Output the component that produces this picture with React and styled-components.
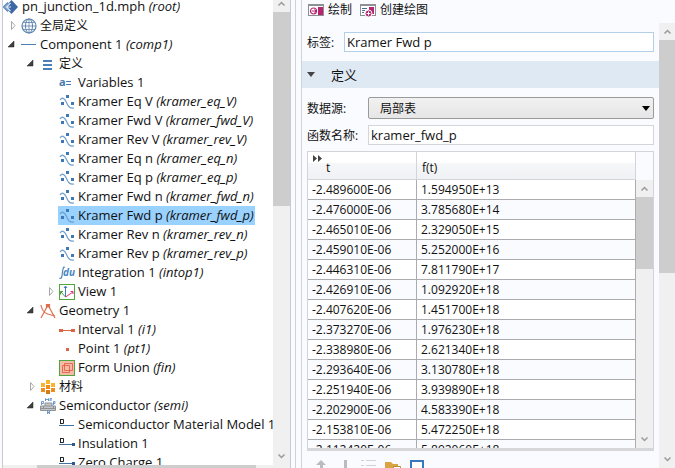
import React, {useState} from 'react'
import styled, {createGlobalStyle, css} from 'styled-components'

/**
 * STYLING
 */
const GlobalStyle = createGlobalStyle`
  * {
    box-sizing: border-box;
  }
  body {
    margin: 0;
    overflow: hidden;
    background: #fafbff;
    color: #111;
    font-family: 'Open Sans', 'Noto Sans CJK SC', sans-serif;
    font-size: 12px;
  }
  button, input, select {
    font: inherit;
    color: inherit;
  }
`

const Window = styled.div`
  display: flex;
  height: 100vh;
  overflow: hidden;
`

const TreePane = styled.nav`
  flex: none;
  display: grid;
  grid-template-columns: 270px 17px;
  grid-template-rows: minmax(0, 1fr) 3px;
  margin-left: 2px;
  background: #fff;
  border: solid #c9c9d0;
  border-width: 0 1px;
`

const TreeView = styled.div`
  overflow: hidden;
`

const TreeList = styled.ul`
  list-style: none;
  margin: -3px 0 0;
  padding: 0;
`

const TreeRow = styled.li`
  display: flex;
  height: 19px;
  padding-left: ${({$depth}) => Math.max($depth - 1, 0) * 19}px;
  white-space: nowrap;
`

const Expander = styled.span`
  flex: none;
  display: flex;
  align-items: center;
  justify-content: center;
  width: 17px;
`

const NodeButton = styled.button`
  display: flex;
  align-items: center;
  gap: 3px;
  padding: 0 1px;
  border: 0;
  background: ${({$selected}) => ($selected ? '#99d1ff' : 'none')};
  line-height: 19px;
  text-align: left;

  ${({$root}) => $root && css`
    padding: 0;
  `}
`

const NodeText = styled.span`
  font-size: ${({$cjk}) => ($cjk ? 12 : 13)}px;
`

const Splitter = styled.div`
  flex: none;
  width: 11px;
  border-right: 1px solid #d0d2da;
  padding-left: 4px;

  &::before {
    content: '';
    display: block;
    height: 100%;
    border-left: 1px solid #d0d2da;
  }
`

const Bar = styled.div`
  display: flex;
  flex-direction: ${({$horizontal}) => ($horizontal ? 'row' : 'column')};
  background: #f0f0f0;
  min-height: 0;
`

const BarButton = styled.button`
  flex: none;
  display: flex;
  align-items: center;
  justify-content: center;
  width: 17px;
  height: 17px;
  padding: 0;
  border: 0;
  background: none;
  margin-top: ${({$cut}) => $cut || 0}px;
`

const Thumb = styled.div`
  flex: 0 1 ${({$size}) => $size}px;
  background: #cdcdcd;
`

const Spacer = styled.div`
  flex: 1;
`

const Settings = styled.main`
  flex: 1;
  min-width: 0;
  display: flex;
  flex-direction: column;
  margin-right: -1px;
`

const Toolbar = styled.div`
  flex: none;
  display: flex;
  gap: 8px;
  height: 23px;
  padding: 0 6px 4px;
`

const ToolButton = styled.button`
  display: flex;
  align-items: center;
  gap: 4px;
  padding: 0;
  border: 0;
  background: none;
  line-height: 16px;
`

const Body = styled.div`
  flex: 1;
  min-height: 0;
  display: flex;
`

const Form = styled.form`
  flex: 1;
  min-width: 0;
  overflow: hidden;
`

const Field = styled.div`
  display: grid;
  grid-template-columns: ${({$label}) => $label}px 1fr;
  align-items: center;
  padding: 0 5px;
  margin-top: ${({$top}) => $top}px;
`

const TextInput = styled.input`
  width: 100%;
  min-width: 0;
  height: 20px;
  padding: 0 2px;
  border: 1px solid ${({$active}) => ($active ? '#b4cfe9' : '#d4d5da')};
  background: #fff;
  font-size: 13px;
  outline: none;
`

const SelectBox = styled.div`
  position: relative;

  svg {
    position: absolute;
    right: 4px;
    top: 9px;
    pointer-events: none;
  }
`

const Select = styled.select`
  display: block;
  appearance: none;
  width: 100%;
  height: 22px;
  padding: 0 11px;
  border: 1px solid #9a9a9a;
  border-radius: 2px;
  background: linear-gradient(#f1f1f1, #e6e6e6);
  outline: none;
`

const SectionHead = styled.button`
  display: flex;
  align-items: center;
  gap: 16px;
  width: 100%;
  height: 27px;
  margin-top: 9px;
  padding: 0 5px;
  border: 0;
  background: #dfe9f4;
  font-size: 13px;
`

const TableFrame = styled.div`
  display: grid;
  grid-template-columns: 1fr 17px;
  height: 300px;
  margin: 6px 5px 0;
  overflow: hidden;
  border: 1px solid #d3d4d9;
  border-bottom: 3px solid #d7d7da;
`

const TableView = styled.div`
  overflow: hidden;
`

const DataTable = styled.table`
  width: 100%;
  table-layout: fixed;
  border-collapse: separate;
  border-spacing: 0;
`

const HeadCell = styled.th`
  width: ${({$width}) => $width || 'auto'};
  height: 28px;
  padding: 0 5px;
  border: solid #d3d4d9;
  border-width: 0 1px 1px 0;
  background: linear-gradient(#fff 40%, #f6f7f9 40%, #eff1f4);
  font-weight: normal;
  text-align: left;
  vertical-align: top;
`

const HeadLabel = styled.span`
  display: block;
  padding-left: ${({$indent}) => $indent || 0}px;
  line-height: 14px;
`

const HeadMark = styled.span`
  display: flex;
  align-items: center;
  height: 9px;
  padding-top: 3px;
`

const Cell = styled.td`
  height: 20px;
  padding: 0 4px;
  border: solid #acacb0;
  border-width: 0 1px 1px 0;
  background: ${({$odd}) => ($odd ? '#fafbff' : '#fff')};
  font-size: 12px;
  line-height: 19px;
`

const ScrollColumn = styled.div`
  display: flex;
  flex-direction: column;
  min-height: 0;
  padding-top: 28px;

  > div {
    flex: 1;
  }
`

const TableTools = styled.div`
  display: flex;
  gap: 8px;
  padding: 8px 11px;
`

const IconButton = styled.button`
  display: flex;
  padding: 0;
  border: 0;
  background: none;
`

/**
 * ICONS
 */
const Svg = ({size = 16, children}) => (
  <svg width={size} height={size} viewBox={`0 0 ${size} ${size}`} fill="none" aria-hidden="true">
    {children}
  </svg>
)

const RootIcon = () => (
  <Svg>
    <path d="M8.500 1L15 8L8.500 15L2 8Z" fill="#3f67a5" />
    <path d="M5 3.500L0.500 8L5 12.500" stroke="#5c88bf" strokeWidth="1.500" />
    <path d="M7.500 4L3.500 8L7.500 12M4 8H8" stroke="#dfe9f5" strokeWidth="1.200" />
  </Svg>
)

const GlobeIcon = () => (
  <Svg>
    <circle cx="8" cy="8" r="7" stroke="#5a83ad" strokeWidth="1.200" />
    <ellipse cx="8" cy="8" rx="3.500" ry="7" stroke="#5a83ad" />
    <path d="M8 1V15M1 8H15M2.500 4.500H13.500M2.500 11.500H13.500" stroke="#5a83ad" strokeWidth="0.800" />
  </Svg>
)

const LineIcon = () => (
  <Svg><path d="M0 7.500H15" stroke="#4a80b8" /></Svg>
)

const DefinitionsIcon = () => (
  <Svg><path d="M3 5H12M3 9H12M3 13H12" stroke="#4a80b8" strokeWidth="2" /></Svg>
)

const VariablesIcon = () => (
  <Svg>
    <text x="0" y="11" fontFamily="Noto Sans" fontSize="11" fontWeight="bold" fill="#4a7cae">a</text>
    <path d="M7 6.500H12M7 9.500H12" stroke="#4a7cae" />
  </Svg>
)

const InterpolationIcon = () => (
  <Svg>
    <path d="M1 6C3 3 5.500 4 7 7.500C9 12 10 14.500 15 14" stroke="#6f9fcc" strokeWidth="1.200" />
    <path d="M2 8H5V11H2ZM7 1H10V4H7ZM12 8H15V11H12Z" fill="#4077b5" />
  </Svg>
)

const IntegrationIcon = () => (
  <Svg>
    <path d="M6 2.500C4.500 1 4 3 3.500 7C3 12 2.500 14.500 0.500 13" stroke="#4a88c0" strokeWidth="1.200" />
    <text x="4" y="11" fontFamily="Noto Sans" fontSize="10" fontWeight="bold" fontStyle="italic" fill="#4a88c0">du</text>
  </Svg>
)

const ViewIcon = () => (
  <Svg>
    <rect x="0.500" y="0.500" width="15" height="15" stroke="#4fa63c" fill="#fff" />
    <path d="M6.500 13V2M5 4L6.500 2L8 4" stroke="#3d7bc0" />
    <path d="M6.500 13L2 8M1.500 10.500V7.500H4" stroke="#46a03a" />
    <path d="M6.500 13L14 8M11.500 7.500H14V10" stroke="#d8357c" />
  </Svg>
)

const GeometryIcon = () => (
  <Svg>
    <path d="M1 2C2 9 6 12 15 12.500M8 2L1 15M8 2L15 15M6.500 1.500H9.500V4H6.500Z" stroke="#dd6e50" strokeWidth="1.200" />
  </Svg>
)

const IntervalIcon = () => (
  <Svg>
    <path d="M2 8.500H14" stroke="#dd6444" />
    <path d="M0 7H4V10H0ZM12 7H16V10H12Z" fill="#dd6444" />
  </Svg>
)

const PointIcon = () => (
  <Svg><path d="M7 7H10V10H7Z" fill="#dd6444" /></Svg>
)

const UnionIcon = () => (
  <Svg>
    <rect x="0.500" y="0.500" width="15" height="15" stroke="#4fa63c" fill="#f3b9a9" />
    <path d="M3.500 5.500H10.500V12.500H3.500ZM5.500 3.500H13.500V10.500H5.500Z" stroke="#dd5b3c" strokeWidth="0.800" />
  </Svg>
)

const MaterialsIcon = () => (
  <Svg>
    <path d="M6 1H10V5H6ZM1 4H5V8H1ZM11 4H15V8H11Z" fill="#f9b32d" />
    <path d="M6 6H10V10H6ZM1 9H5V13H1ZM11 9H15V13H11Z" fill="#f08b1f" />
    <path d="M6 11H10V15H6Z" fill="#d87a14" />
  </Svg>
)

const SemiconductorIcon = () => (
  <Svg>
    <path d="M5 5H12V8H15.500V12.500H0.500V8H5Z" fill="#c4c7ca" stroke="#8e9296" />
    <path d="M0.500 10.500H15.500M5 8H12M3.500 8V10M13.500 8V10" stroke="#8e9296" />
    <path d="M1.500 7V3.500H3.500V5.500H1.500M5.500 3V0.500L7 2L8.500 0.500V3M10 3V0.500H12M10 2H12M13.500 7V3.500H15V5.500H13.500M7.500 16V13L9.500 16V13" stroke="#6b9ad0" />
  </Svg>
)

const DomainIcon = ({dot}) => (
  <Svg>
    <path d="M1 2.500H4.500V6.500H1M1.500 2.500V6.500" stroke="#222" />
    <path d="M0 8.500H15" stroke="#4573a0" />
    {dot && <path d="M13 7H16V10H13Z" fill="#2c5a8c" />}
  </Svg>
)

const PlotIcon = () => (
  <Svg>
    <rect x="0.500" y="2.500" width="15" height="11" stroke="#8d8f94" fill="#fff" />
    <path d="M0 3H16" stroke="#8d8f94" strokeWidth="2" />
    <path d="M10 5H15V13H10Z" fill="#b6246e" />
    <circle cx="5.500" cy="9" r="3" stroke="#b6246e" strokeWidth="1.200" />
    <path d="M4 9H8M6.500 7.500L8 9L6.500 10.500" stroke="#b6246e" />
  </Svg>
)

const CreatePlotIcon = () => (
  <Svg>
    <rect x="0.500" y="2.500" width="15" height="11" stroke="#8d8f94" fill="#fff" />
    <path d="M0 3H16" stroke="#8d8f94" strokeWidth="2" />
    <path d="M2 6.500H7M2 8.500H5M2 10.500H4" stroke="#4c6a96" />
    <path d="M9 5H14V12H9Z" fill="#b6246e" />
    <circle cx="8.500" cy="11.500" r="3.500" fill="#b6246e" stroke="#fff" />
    <path d="M6.500 11.500H10.500M8.500 9.500V13.500" stroke="#fff" />
  </Svg>
)

const Chevron = ({down}) => (
  <Svg size={9}>
    <path d={down ? 'M1.500 2.500L4.500 5.500L7.500 2.500' : 'M1.500 6.500L4.500 3.500L7.500 6.500'} stroke="#9b9b9b" strokeWidth="1.500" />
  </Svg>
)

const DownTriangle = ({color = '#000'}) => (
  <svg width="8" height="5" viewBox="0 0 8 5" aria-hidden="true"><path d="M0 0H8L4 5Z" fill={color} /></svg>
)

const ExpandArrow = ({open}) => (
  <Svg size={9}>
    {open
      ? <path d="M7 1V7H1Z" fill="#404040" stroke="#262626" strokeWidth="0.500" />
      : <path d="M4.500 0.500L8 4.500L4.500 8.500Z" fill="#fff" stroke="#a8a8a8" />}
  </Svg>
)

/**
 * DATA
 */
const nodes = [
  {depth: 0, name: 'pn_junction_1d.mph', tag: 'root', icon: <RootIcon />},
  {depth: 1, name: '全局定义', icon: <GlobeIcon />, open: false, cjk: true},
  {depth: 1, name: 'Component 1', tag: 'comp1', icon: <LineIcon />, open: true},
  {depth: 2, name: '定义', icon: <DefinitionsIcon />, open: true, cjk: true},
  {depth: 3, name: 'Variables 1', icon: <VariablesIcon />},
  {depth: 3, name: 'Kramer Eq V', tag: 'kramer_eq_V', icon: <InterpolationIcon />},
  {depth: 3, name: 'Kramer Fwd V', tag: 'kramer_fwd_V', icon: <InterpolationIcon />},
  {depth: 3, name: 'Kramer Rev V', tag: 'kramer_rev_V', icon: <InterpolationIcon />},
  {depth: 3, name: 'Kramer Eq n', tag: 'kramer_eq_n', icon: <InterpolationIcon />},
  {depth: 3, name: 'Kramer Eq p', tag: 'kramer_eq_p', icon: <InterpolationIcon />},
  {depth: 3, name: 'Kramer Fwd n', tag: 'kramer_fwd_n', icon: <InterpolationIcon />},
  {depth: 3, name: 'Kramer Fwd p', tag: 'kramer_fwd_p', icon: <InterpolationIcon />},
  {depth: 3, name: 'Kramer Rev n', tag: 'kramer_rev_n', icon: <InterpolationIcon />},
  {depth: 3, name: 'Kramer Rev p', tag: 'kramer_rev_p', icon: <InterpolationIcon />},
  {depth: 3, name: 'Integration 1', tag: 'intop1', icon: <IntegrationIcon />},
  {depth: 3, name: 'View 1', icon: <ViewIcon />, open: false},
  {depth: 2, name: 'Geometry 1', icon: <GeometryIcon />, open: true},
  {depth: 3, name: 'Interval 1', tag: 'i1', icon: <IntervalIcon />},
  {depth: 3, name: 'Point 1', tag: 'pt1', icon: <PointIcon />},
  {depth: 3, name: 'Form Union', tag: 'fin', icon: <UnionIcon />},
  {depth: 2, name: '材料', icon: <MaterialsIcon />, open: false, cjk: true},
  {depth: 2, name: 'Semiconductor', tag: 'semi', icon: <SemiconductorIcon />, open: true},
  {depth: 3, name: 'Semiconductor Material Model 1', icon: <DomainIcon />},
  {depth: 3, name: 'Insulation 1', icon: <DomainIcon dot />},
  {depth: 3, name: 'Zero Charge 1', icon: <DomainIcon dot />}
]

const samples = [
  ['-2.489600E-06', '1.594950E+13'],
  ['-2.476000E-06', '3.785680E+14'],
  ['-2.465010E-06', '2.329050E+15'],
  ['-2.459010E-06', '5.252000E+16'],
  ['-2.446310E-06', '7.811790E+17'],
  ['-2.426910E-06', '1.092920E+18'],
  ['-2.407620E-06', '1.451700E+18'],
  ['-2.373270E-06', '1.976230E+18'],
  ['-2.338980E-06', '2.621340E+18'],
  ['-2.293640E-06', '3.130780E+18'],
  ['-2.251940E-06', '3.939890E+18'],
  ['-2.202900E-06', '4.583390E+18'],
  ['-2.153810E-06', '5.472250E+18'],
  ['-2.112420E-06', '5.892060E+18']
]

/**
 * COMPONENT
 */
const ScrollBar = ({thumb, cut}) => (
  <Bar>
    <BarButton type="button" aria-label="Scroll up" $cut={cut}><Chevron /></BarButton>
    <Thumb $size={thumb} />
    <Spacer />
    <BarButton type="button" aria-label="Scroll down"><Chevron down /></BarButton>
  </Bar>
)

const ModelTree = () => {
  const [selected, setSelected] = useState('Kramer Fwd p')

  return (
    <TreePane>
      <TreeView>
        <TreeList>
          {nodes.map(node => (
            <TreeRow key={node.name} $depth={node.depth}>
              {node.depth > 0 && (
                <Expander>
                  {node.open !== undefined && <ExpandArrow open={node.open} />}
                </Expander>
              )}
              <NodeButton
                type="button"
                $root={node.depth === 0}
                $selected={node.name === selected}
                onClick={() => setSelected(node.name)}
              >
                {node.icon}
                <NodeText $cjk={node.cjk}>
                  {node.name}{node.tag && <i> ({node.tag})</i>}
                </NodeText>
              </NodeButton>
            </TreeRow>
          ))}
        </TreeList>
      </TreeView>
      <ScrollBar thumb={194} cut={-5} />
      <Bar $horizontal>
        <BarButton as="span" />
        <BarButton as="span" />
        <Thumb $size={219} />
      </Bar>
      <Bar />
    </TreePane>
  )
}

const ValueTable = () => (
  <TableFrame>
    <TableView>
      <DataTable>
        <thead>
          <tr>
            <HeadCell $width="109px">
              <HeadMark>
                <svg width="9" height="7" viewBox="0 0 9 7" aria-hidden="true">
                  <path d="M0 0L4 3.500L0 7ZM5 0L9 3.500L5 7Z" fill="#444" />
                </svg>
              </HeadMark>
              <HeadLabel $indent={13}>t</HeadLabel>
            </HeadCell>
            <HeadCell>
              <HeadMark />
              <HeadLabel>f(t)</HeadLabel>
            </HeadCell>
          </tr>
        </thead>
        <tbody>
          {samples.map(([t, f], i) => (
            <tr key={t}>
              <Cell $odd={i % 2 === 1}>{t}</Cell>
              <Cell $odd={i % 2 === 1}>{f}</Cell>
            </tr>
          ))}
        </tbody>
      </DataTable>
    </TableView>
    <ScrollColumn>
      <ScrollBar thumb={72} />
    </ScrollColumn>
  </TableFrame>
)

const App = () => {
  return (
    <Window>
      <GlobalStyle />
      <ModelTree />
      <Splitter />
      <Settings>
        <Toolbar>
          <ToolButton type="button"><PlotIcon />绘制</ToolButton>
          <ToolButton type="button"><CreatePlotIcon />创建绘图</ToolButton>
        </Toolbar>
        <Body>
          <Form>
            <Field $label={37} $top={9}>
              <label htmlFor="label">标签:</label>
              <TextInput id="label" $active defaultValue="Kramer Fwd p" />
            </Field>
            <SectionHead type="button"><DownTriangle color="#444" />定义</SectionHead>
            <Field $label={61} $top={9}>
              <label htmlFor="source">数据源:</label>
              <SelectBox>
                <Select id="source" defaultValue="局部表">
                  <option>局部表</option>
                </Select>
                <DownTriangle />
              </SelectBox>
            </Field>
            <Field $label={61} $top={6}>
              <label htmlFor="fname">函数名称:</label>
              <TextInput id="fname" defaultValue="kramer_fwd_p" />
            </Field>
            <ValueTable />
            <TableTools>
              <IconButton type="button" aria-label="Move up">
                <Svg><path d="M8 1L13 6H10V16H7V6H3Z" fill="#b9bbc0" /></Svg>
              </IconButton>
              <IconButton type="button" aria-label="Move down">
                <Svg><path d="M7 1H10V11H13L8 16L3 11H7Z" fill="#b9bbc0" /></Svg>
              </IconButton>
              <IconButton type="button" aria-label="Clear table">
                <Svg><path d="M0 1.500H3M5 1.500H15M0 6.500H3M5 6.500H15M0 11.500H3M5 11.500H15" stroke="#d0d2d6" /></Svg>
              </IconButton>
              <IconButton type="button" aria-label="Load from file">
                <Svg>
                  <path d="M0 3H6L8 5H13V14H0Z" fill="#d9a441" />
                  <path d="M8.500 7.500H15.500V14H8.500Z" fill="#fff" stroke="#b98a35" />
                </Svg>
              </IconButton>
              <IconButton type="button" aria-label="Save to file">
                <Svg><path d="M2 2H14V15H2Z" fill="#fff" stroke="#3b78bb" strokeWidth="2" /></Svg>
              </IconButton>
            </TableTools>
          </Form>
          <ScrollBar thumb={233} />
        </Body>
      </Settings>
    </Window>
  )
}

export default App
